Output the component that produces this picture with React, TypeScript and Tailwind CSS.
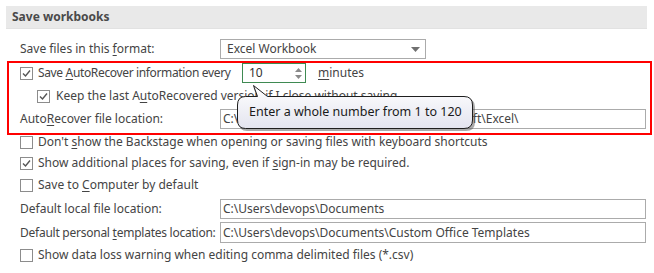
import React from "react";

function Checkbox({ checked }: { checked?: boolean }) {
  return (
    <div className="w-[13px] h-[13px] border border-[#8c8c8c] bg-white flex items-center justify-center shrink-0">
      {checked && (
        <svg width="11" height="11" viewBox="0 0 11 11">
          <path d="M2 5.5 L4.5 8 L9 2.5" fill="none" stroke="#555" strokeWidth="1.4" />
        </svg>
      )}
    </div>
  );
}

function U({ children }: { children: React.ReactNode }) {
  return <span className="underline underline-offset-2">{children}</span>;
}

function TextBox({ value, h = "h-[20px]" }: { value: string; h?: string }) {
  return (
    <div className={`w-[426px] ${h} border border-[#ababab] bg-white flex items-center pl-[2px] text-[#444] shrink-0`}>
      {value}
    </div>
  );
}

export default function App() {
  return (
    <div className="relative w-[654px] h-[273px] bg-white pt-[6px] text-[12px] text-[#444] font-['Noto_Sans',sans-serif] leading-none overflow-hidden whitespace-nowrap">
      {/* Header */}
      <div className="ml-[6px] w-[641px] h-[23px] bg-[#e9e9e9] border-b border-[#e2e2e2] pl-[6px] flex items-center font-bold text-[#4a4a4a]">
        Save workbooks
      </div>

      {/* Save format */}
      <div className="mt-[10px] h-[20px] flex items-center pl-[20px]">
        <div className="w-[200px] shrink-0">
          Save files in this <U>f</U>ormat:
        </div>
        <div className="w-[206px] h-[20px] border border-[#ababab] bg-white flex items-center justify-between pl-[6px] pr-[5px]">
          <span>Excel Workbook</span>
          <svg width="9" height="5" viewBox="0 0 9 5">
            <path d="M0 0 H9 L4.5 5 Z" fill="#707070" />
          </svg>
        </div>
      </div>

      {/* AutoRecover group */}
      <div className="mt-[2px] ml-[7px] w-[645px] border-2 border-[#ff0000] pl-[11px] pr-[2px] pb-[4px]">
        <div className="h-[20px] flex items-center">
          <Checkbox checked />
          <span className="ml-[5px] w-[204px] shrink-0 tracking-[-0.35px]">
            Save <U>A</U>utoRecover information every
          </span>
          <div className="w-[64px] h-[20px] border border-[#3f8a52] bg-white flex items-center justify-between pl-[6px] pr-[3px] shrink-0">
            <span className="text-[#333]">10</span>
            <div className="flex flex-col gap-[3px]">
              <svg width="7" height="4" viewBox="0 0 7 4">
                <path d="M0 4 L3.5 0 L7 4 Z" fill="#8a8a8a" />
              </svg>
              <svg width="7" height="4" viewBox="0 0 7 4">
                <path d="M0 0 H7 L3.5 4 Z" fill="#8a8a8a" />
              </svg>
            </div>
          </div>
          <span className="ml-[12px]">
            <U>m</U>inutes
          </span>
        </div>
        <div className="mt-[3px] h-[20px] flex items-center pl-[17px]">
          <Checkbox checked />
          <span className="ml-[6px]">
            Keep the last A<U>u</U>toRecovered version if I close without saving
          </span>
        </div>
        <div className="mt-[3px] h-[20px] flex items-center">
          <div className="w-[200px] shrink-0">
            Auto<U>R</U>ecover file location:
          </div>
          <TextBox value="C:\Users\devops\AppData\Roaming\Microsoft\Excel\" />
        </div>
      </div>

      {/* Other options */}
      <div className="pl-[20px]">
        <div className="h-[14px] flex items-center">
          <Checkbox />
          <span className="ml-[5px]">
            Don't <U>s</U>how the Backstage when opening or saving files with keyboard shortcuts
          </span>
        </div>
        <div className="mt-[7px] h-[14px] flex items-center">
          <Checkbox checked />
          <span className="ml-[5px]">
            Show additional places for saving, even if <U>s</U>ign-in may be required.
          </span>
        </div>
        <div className="mt-[8px] h-[14px] flex items-center">
          <Checkbox />
          <span className="ml-[5px]">
            Save to <U>C</U>omputer by default
          </span>
        </div>
        <div className="mt-[7px] h-[20px] flex items-center">
          <div className="w-[200px] shrink-0">
            Default local f<U>i</U>le location:
          </div>
          <TextBox value="C:\Users\devops\Documents" />
        </div>
        <div className="mt-[3px] h-[21px] flex items-center">
          <div className="w-[200px] shrink-0 tracking-[-0.25px]">
            Default personal <U>t</U>emplates location:
          </div>
          <TextBox value="C:\Users\devops\Documents\Custom Office Templates" h="h-[21px]" />
        </div>
        <div className="mt-[5px] h-[14px] flex items-center">
          <Checkbox />
          <span className="ml-[5px]">
            Show data loss warning when editing comma delimited files (*.csv)
          </span>
        </div>
      </div>

      {/* Tooltip */}
      <div className="absolute left-[237px] top-[84px] w-[240px] h-[48px]">
        <svg width="240" height="48" viewBox="0 0 240 48" className="absolute inset-0">
          <defs>
            <linearGradient id="tipbg" x1="0" y1="0" x2="0" y2="1">
              <stop offset="0" stopColor="#ffffff" />
              <stop offset="1" stopColor="#e3e4ef" />
            </linearGradient>
          </defs>
          <path
            d="M10.5 14.5 H20.5 L16.5 3.5 L30.5 14.5 H229 Q238 14.5 238 23 V38 Q238 47 229 47 H10 Q2 47 2 38 V23 Q2 14.5 10.5 14.5 Z"
            fill="#555"
            opacity="0.5"
          />
          <path
            d="M8.5 12.5 H20.5 L16.5 1.5 L30.5 12.5 H227 Q235.5 12.5 235.5 21 V36 Q235.5 44.5 227 44.5 H8.5 Q0.5 44.5 0.5 36 V21 Q0.5 12.5 8.5 12.5 Z"
            fill="url(#tipbg)"
            stroke="#1e1e1e"
            strokeWidth="1"
          />
        </svg>
        <div className="absolute left-[12px] top-[22px] text-[12.5px] text-[#1a1a1a] leading-none">
          Enter a whole number from 1 to 120
        </div>
      </div>
    </div>
  );
}
